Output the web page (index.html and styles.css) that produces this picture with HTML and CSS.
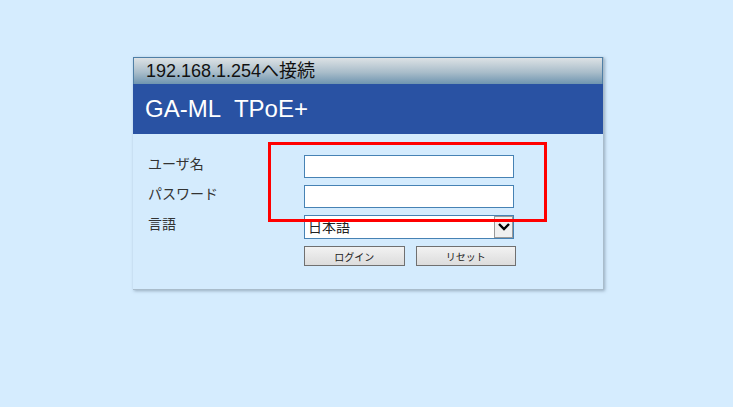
FILE: index.html
```html
<!DOCTYPE html>
<html lang="ja">
  <head>
    <meta charset="UTF-8" />
    <meta name="viewport" content="width=device-width, initial-scale=1.0" />
    <title>ログイン</title>
    <link rel="stylesheet" href="styles.css">
  </head>
  <body>
    <div class="page">
      <div class="panel">
        <div class="caption">192.168.1.254へ接続</div>
        <div class="model">GA-ML&nbsp; TPoE+</div>
        <div class="body">
          <div class="form">
            <label class="label">ユーザ名</label>
            <input class="field" type="text" />
            <label class="label">パスワード</label>
            <input class="field" type="password" />
            <label class="label">言語</label>
            <div class="select">
              <span class="select-text">日本語</span>
              <span class="select-btn">
                <svg width="14" height="10" viewBox="0 0 14 10">
                  <path d="M2 2 L7 7 L12 2" fill="none" stroke="#000" stroke-width="2.4" />
                </svg>
              </span>
            </div>
            <span></span>
            <div class="buttons">
              <button class="btn">ログイン</button>
              <button class="btn">リセット</button>
            </div>
          </div>
          <div class="mark"></div>
        </div>
      </div>
    </div>
  </body>
</html>
```

FILE: styles.css
```css
* {
  margin: 0;
  padding: 0;
  box-sizing: border-box;
}
body {
  background-color: #d5ecfe;
  font-family: "Liberation Sans", "Noto Sans CJK JP", sans-serif;
}
.page {
  padding: 57px 0 0 133px;
  min-height: 407px;
}
.panel {
  width: 471px;
  background-color: #d4ebfd;
  border-right: 1px solid #a9bccb;
  border-bottom: 1px solid #a9bccb;
  box-shadow: 1px 1px 3px rgba(90, 110, 130, 0.5);
}
.caption {
  height: 27px;
  padding-left: 12px;
  border: 1px solid #4f7fa6;
  border-bottom: none;
  background: linear-gradient(#dde2e5, #a9bdca 55%, #6f95b0);
  color: #111;
  font-size: 18px;
  line-height: 27px;
}
.model {
  height: 50px;
  padding-left: 12px;
  background-color: #2952a3;
  color: #fff;
  font-size: 24px;
  line-height: 50px;
}
.body {
  position: relative;
  padding: 21px 0 23px 15px;
}
.form {
  display: grid;
  grid-template-columns: 156px 212px;
  row-gap: 7px;
}
.label {
  font-size: 14px;
  color: #333;
  line-height: 18px;
}
.field {
  width: 210px;
  height: 23px;
  border: 1px solid #4682b4;
  background: #fff;
}
.select {
  display: flex;
  width: 210px;
  height: 24px;
  border: 1px solid #4682b4;
  background: #fff;
}
.select-text {
  flex: 1;
  font-size: 14px;
  color: #222;
  padding-left: 3px;
  line-height: 22px;
}
.select-btn {
  width: 19px;
  display: flex;
  align-items: center;
  justify-content: center;
  border: 1px solid #999;
  background: #f0f0f0;
}
.buttons {
  display: flex;
  gap: 11px;
}
.btn {
  width: 101px;
  height: 20px;
  border: 1px solid #707070;
  background: linear-gradient(#f2f2f2, #dcdcdc);
  font-family: "Liberation Sans", "Noto Sans CJK JP", sans-serif;
  font-size: 10px;
  color: #222;
}
.mark {
  position: absolute;
  left: 135px;
  top: 8px;
  width: 279px;
  height: 80px;
  border: 3px solid #ff0000;
}
```
